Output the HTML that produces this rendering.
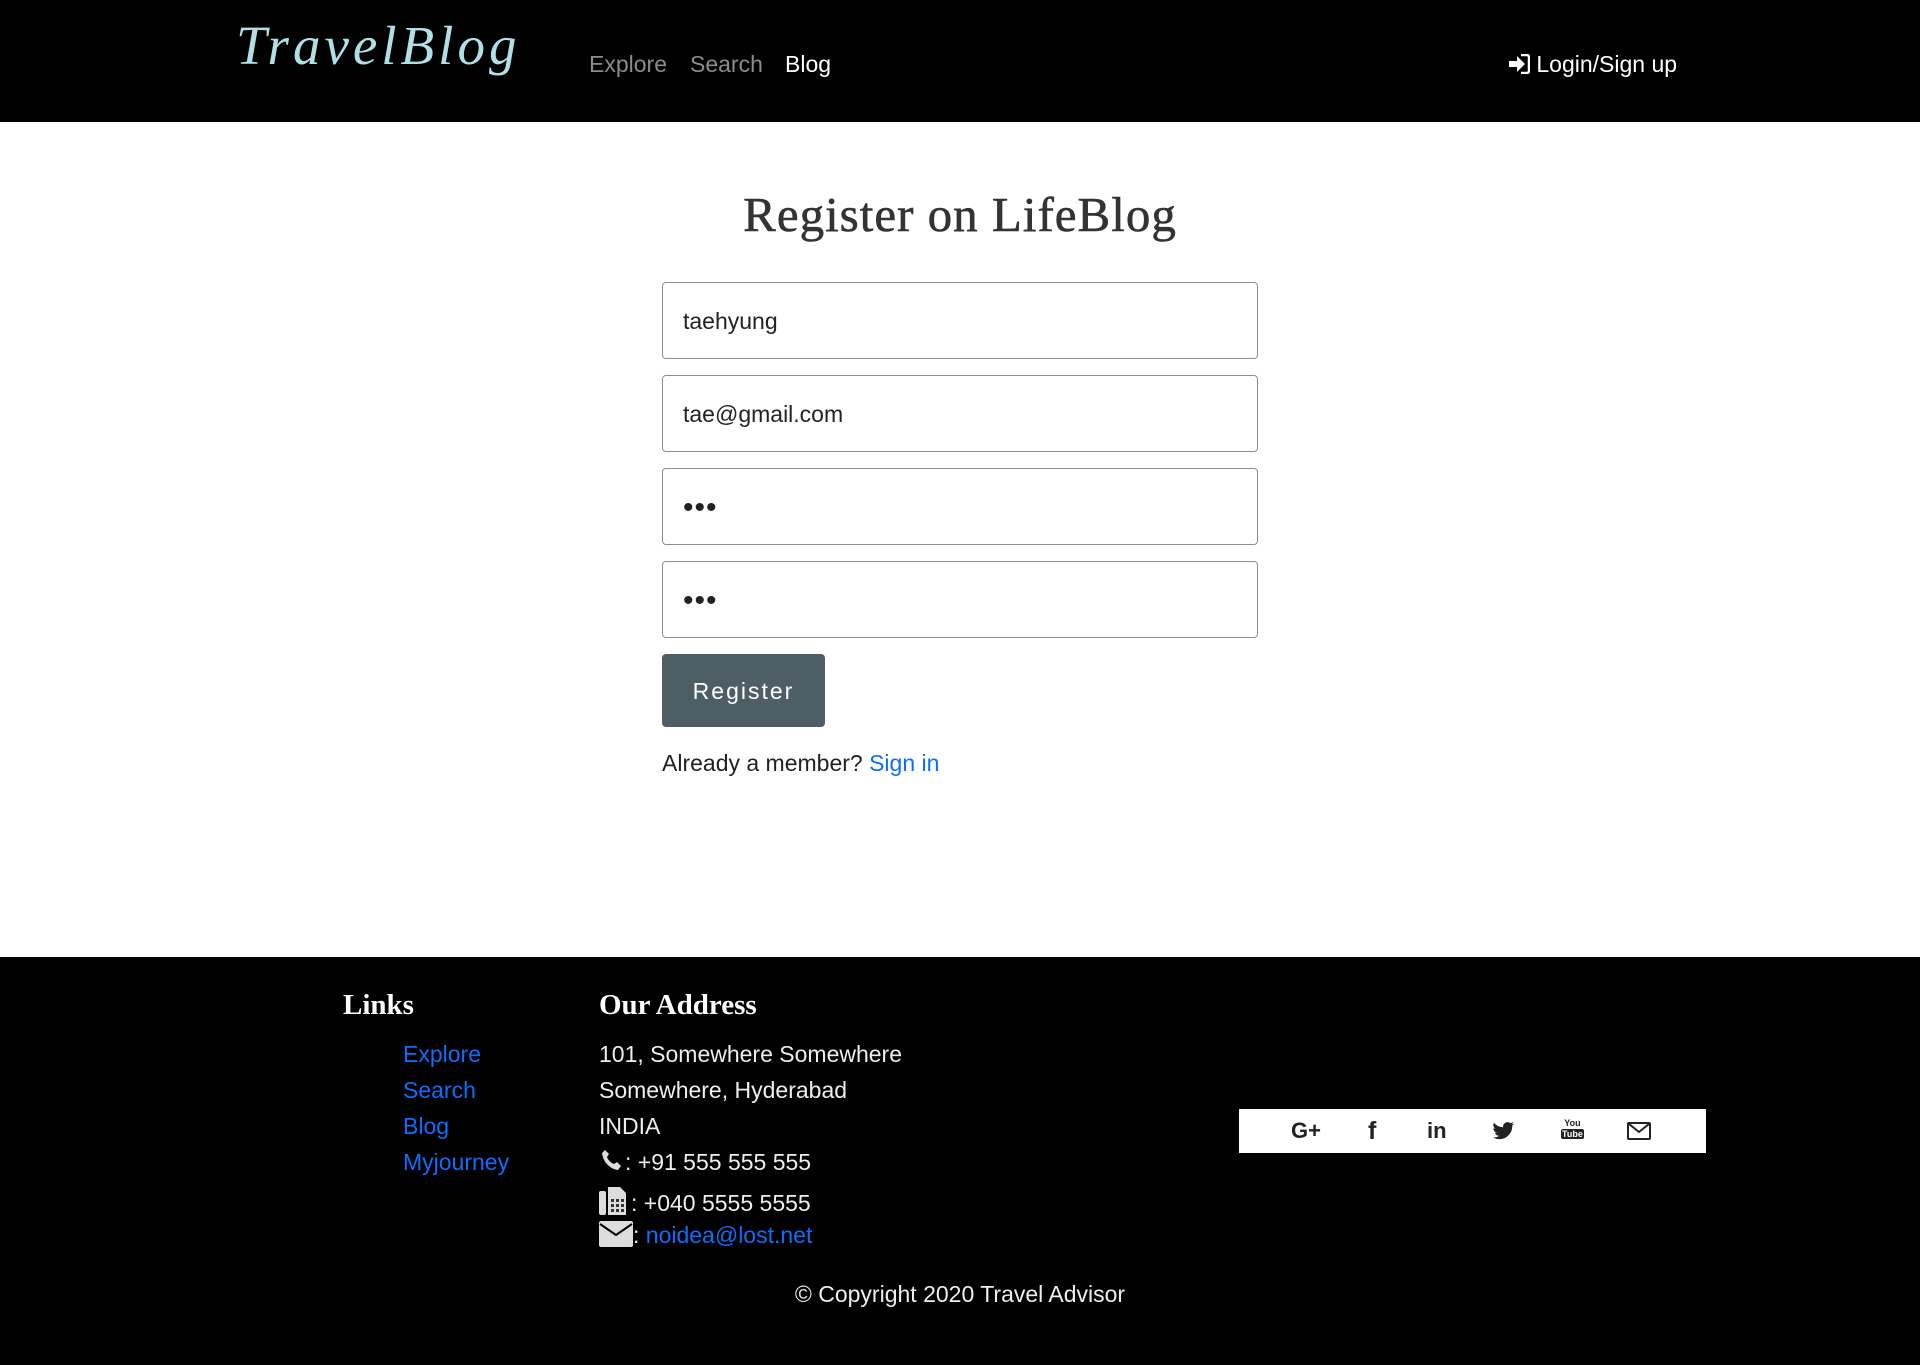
<!DOCTYPE html>
<html><head><meta charset="utf-8"><style>
*{box-sizing:border-box;margin:0;padding:0}
body{width:1920px;height:1365px;background:#fff;font-family:"Liberation Sans",sans-serif;position:relative;overflow:hidden}
.a{position:absolute;white-space:nowrap}
header{position:absolute;left:0;top:0;width:1920px;height:122px;background:#000}
.logo{left:236px;top:14px;font-family:"Liberation Serif",serif;font-style:italic;font-size:55px;color:#b0e0e6;letter-spacing:4px}
.nav{top:51px;font-size:23px;color:#8c8c8c}
.in{position:absolute;left:662px;width:596px;height:77px;border:1px solid #8a8f94;border-radius:4px;font-size:23px;color:#222;padding:0 0 0 20px;line-height:77px}
footer{position:absolute;left:0;top:957px;width:1920px;height:408px;background:#000;color:#eee}
.h{font-family:"Liberation Serif",serif;font-weight:bold;font-size:29px;color:#fff}
.f{font-size:23px}
.lk{color:#0d6efd}
</style></head><body>
<header>
<div class="a logo">TravelBlog</div>
<div class="a nav" style="left:589px">Explore</div>
<div class="a nav" style="left:690px">Search</div>
<div class="a nav" style="left:785px;color:#fff">Blog</div>
<div class="a nav" style="left:1508px;color:#fff"><svg width="22" height="20" viewBox="0 0 22 20" style="vertical-align:-2px"><path d="M1 7h8V2l8 8-8 8v-5H1z" fill="#fff"/><path d="M13 1h6a2 2 0 0 1 2 2v14a2 2 0 0 1-2 2h-6" stroke="#fff" stroke-width="2.5" fill="none"/></svg> Login/Sign up</div>
</header>
<div class="a" style="left:0;right:0;top:186px;text-align:center;font-family:'Liberation Serif',serif;font-size:49px;color:#333;letter-spacing:1px;-webkit-text-stroke:0.6px #333">Register on LifeBlog</div>
<div class="in" style="top:282px">taehyung</div>
<div class="in" style="top:375px">tae@gmail.com</div>
<div class="in" style="top:468px;font-size:30px;letter-spacing:1px">•••</div>
<div class="in" style="top:561px;font-size:30px;letter-spacing:1px">•••</div>
<div class="a" style="left:662px;top:654px;width:163px;height:73px;background:#4d5f65;border-radius:4px;color:#fff;font-size:23px;letter-spacing:2px;text-align:center;line-height:75px">Register</div>
<div class="a f" style="left:662px;top:750px;color:#222">Already a member? <span class="lk">Sign in</span></div>
<footer>
<div class="a h" style="left:343px;top:32px">Links</div>
<div class="a f lk" style="left:403px;top:84px">Explore</div>
<div class="a f lk" style="left:403px;top:120px">Search</div>
<div class="a f lk" style="left:403px;top:156px">Blog</div>
<div class="a f lk" style="left:403px;top:192px">Myjourney</div>
<div class="a h" style="left:599px;top:32px">Our Address</div>
<div class="a f" style="left:599px;top:84px">101, Somewhere Somewhere</div>
<div class="a f" style="left:599px;top:120px">Somewhere, Hyderabad</div>
<div class="a f" style="left:599px;top:156px">INDIA</div>
<div class="a f" style="left:599px;top:192px"><svg width="26" height="24" viewBox="0 0 24 24" style="vertical-align:-3px"><path d="M5 1l4 4-2 3c1 3 4 6 7 7l3-2 4 4-3 4C10 20 3 13 2 4z" fill="#ddd"/></svg>: +91 555 555 555</div>
<div class="a f" style="left:599px;top:228px"><svg width="32" height="32" viewBox="0 0 32 32" style="vertical-align:-6px"><rect x="0" y="6" width="7" height="24" rx="2" fill="#ddd"/><path d="M9 2h12l6 6v22H9z" fill="#ddd"/><g fill="#333"><rect x="12" y="14" width="3" height="3"/><rect x="17" y="14" width="3" height="3"/><rect x="22" y="14" width="3" height="3"/><rect x="12" y="19" width="3" height="3"/><rect x="17" y="19" width="3" height="3"/><rect x="22" y="19" width="3" height="3"/><rect x="12" y="24" width="3" height="3"/><rect x="17" y="24" width="3" height="3"/><rect x="22" y="24" width="3" height="3"/></g></svg>: +040 5555 5555</div>
<div class="a f" style="left:599px;top:264px"><svg width="34" height="26" viewBox="0 0 34 26" style="vertical-align:-4px"><rect x="0" y="0" width="34" height="26" rx="2" fill="#ddd"/><path d="M1 3l16 11 16-11" stroke="#000" stroke-width="2" fill="none"/></svg>: <span class="lk">noidea@lost.net</span></div>
<div class="a" style="left:1239px;top:152px;width:467px;height:44px;background:#fff;color:#222;font-weight:bold;font-size:22px">
<span class="a" style="left:52px;top:9px">G+</span>
<span class="a" style="left:129px;top:8px;font-size:25px">f</span>
<span class="a" style="left:188px;top:9px">in</span>
<span class="a" style="left:254px;top:12px"><svg width="22" height="20" viewBox="0 0 24 20"><path d="M23 2c-1 .5-2 .7-3 .8 1-.6 2-1.6 2-2.6-1 .6-2 1-3 1.2A5 5 0 0 0 11 6 14 14 0 0 1 1 1a5 5 0 0 0 1.5 6.5c-.8 0-1.6-.3-2.2-.6 0 2.4 1.7 4.4 4 4.9-.7.2-1.5.2-2.2.1.6 2 2.5 3.4 4.6 3.4A10 10 0 0 1 0 17a14 14 0 0 0 21-12V4c1-.6 1.6-1.3 2-2z" fill="#222"/></svg></span>
<span class="a" style="left:322px;top:9px;font-size:9px;line-height:11px;text-align:center">You<br><span style="background:#222;color:#fff;padding:0 1px;border-radius:2px">Tube</span></span>
<span class="a" style="left:388px;top:13px;width:24px;height:18px;border:2px solid #222;border-radius:2px"><svg width="20" height="14" style="position:absolute;left:0;top:0"><path d="M0 0l10 8 10-8" stroke="#222" stroke-width="2" fill="none"/></svg></span>
</div>
<div class="a f" style="left:0;right:0;top:324px;text-align:center">© Copyright 2020 Travel Advisor</div>
</footer>
</body></html>
